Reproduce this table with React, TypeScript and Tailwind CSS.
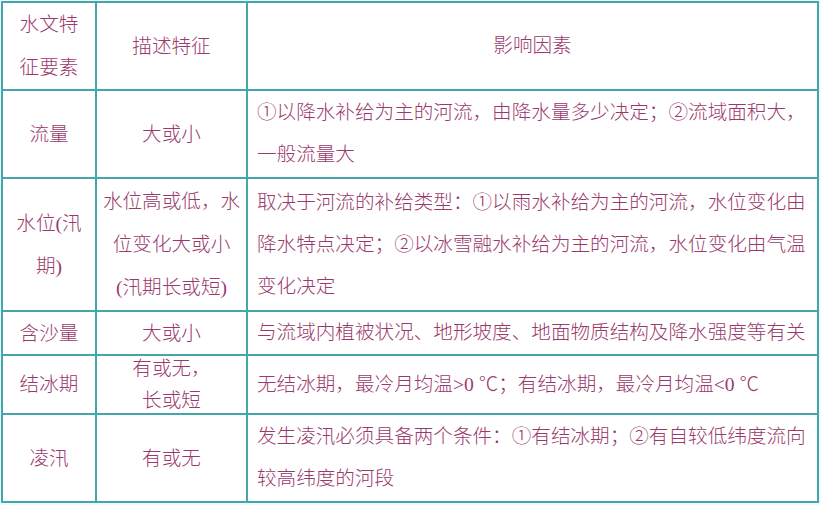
import React from "react";

type Row = {
  name: React.ReactNode;
  desc: React.ReactNode;
  factor: React.ReactNode;
  h: string;
  descLeading?: string;
  center?: boolean;
};

const rows: Row[] = [
  {
    name: (
      <>
        水文特
        <br />
        征要素
      </>
    ),
    desc: "描述特征",
    factor: "影响因素",
    h: "h-[86px]",
    center: true,
  },
  {
    name: "流量",
    desc: "大或小",
    factor: (
      <>
        ①以降水补给为主的河流，由降水量多少决定；②流域面积大，
        <br />
        一般流量大
      </>
    ),
    h: "h-[86px]",
  },
  {
    name: (
      <>
        水位<span className="font-['Liberation_Serif']">(</span>汛
        <br />
        期<span className="font-['Liberation_Serif']">)</span>
      </>
    ),
    desc: (
      <>
        水位高或低，水
        <br />
        位变化大或小
        <br />
        <span className="font-['Liberation_Serif']">(</span>汛期长或短
        <span className="font-['Liberation_Serif']">)</span>
      </>
    ),
    factor: (
      <>
        取决于河流的补给类型：①以雨水补给为主的河流，水位变化由
        <br />
        降水特点决定；②以冰雪融水补给为主的河流，水位变化由气温
        <br />
        变化决定
      </>
    ),
    h: "h-[131px]",
  },
  {
    name: "含沙量",
    desc: "大或小",
    factor: "与流域内植被状况、地形坡度、地面物质结构及降水强度等有关",
    h: "h-[42px]",
  },
  {
    name: "结冰期",
    desc: (
      <>
        有或无，
        <br />
        长或短
      </>
    ),
    factor: "无结冰期，最冷月均温>0 ℃；有结冰期，最冷月均温<0 ℃",
    h: "h-[57px]",
    descLeading: "leading-[32px]",
  },
  {
    name: "凌汛",
    desc: "有或无",
    factor: (
      <>
        发生凌汛必须具备两个条件：①有结冰期；②有自较低纬度流向
        <br />
        较高纬度的河段
      </>
    ),
    h: "h-[86px]",
  },
];

export default function App() {
  return (
    <div className="w-[821px] h-[505px] bg-[#eefafa] overflow-hidden font-['Liberation_Serif','Noto_Sans_CJK_SC',serif] font-light text-[19.6px] text-[#9a3a6c]">
      <div className="ml-[1px] mt-[1px] w-[818px] grid grid-cols-[92px_149px_569px] gap-[2px] p-[2px] bg-[#43a6aa]">
        {rows.map((r, i) => (
          <React.Fragment key={i}>
            <div
              className={`${r.h} bg-white flex items-center justify-center text-center leading-[43px] whitespace-nowrap`}
            >
              <div>{r.name}</div>
            </div>
            <div
              className={`${r.h} bg-white flex items-center justify-center text-center whitespace-nowrap ${
                r.descLeading ?? "leading-[43px]"
              }`}
            >
              <div>{r.desc}</div>
            </div>
            <div
              className={`${r.h} bg-white flex items-center leading-[42px] whitespace-nowrap ${
                r.center ? "justify-center" : "pl-[9px]"
              }`}
            >
              <div>{r.factor}</div>
            </div>
          </React.Fragment>
        ))}
      </div>
    </div>
  );
}
